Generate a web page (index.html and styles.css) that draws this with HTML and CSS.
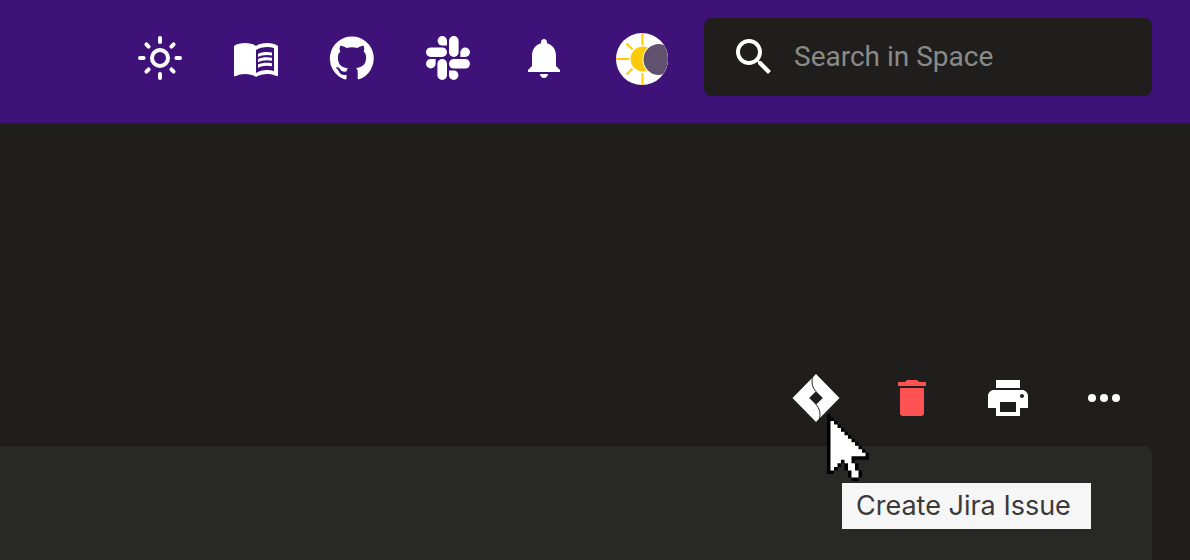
FILE: index.html
```html
<!DOCTYPE html>
<html lang="en">
<head>
<meta charset="utf-8">
<meta name="viewport" content="width=device-width, initial-scale=1">
<title>Space</title>
<link rel="stylesheet" href="styles.css">
</head>
<body>
<header class="topbar">
  <nav class="topbar-nav" aria-label="Main">
    <button class="icon-button" type="button" aria-label="Toggle theme">
      <svg class="icon" viewBox="0 0 24 24"><g fill="none" stroke="currentColor" stroke-width="2" stroke-linecap="round"><circle cx="12" cy="12" r="4"/><path d="M12 2v2M12 20v2M2 12h1.8M20.2 12H22M5.2 5.2l1.1 1.1M17.7 17.7l1.1 1.1M5.2 18.8l1.1-1.1M17.7 6.3l1.1-1.1"/></g></svg>
    </button>
    <a class="icon-button" href="#docs" aria-label="Documentation">
      <svg class="icon" viewBox="0 0 24 24"><path d="M21 5c-1.11-.35-2.33-.5-3.5-.5-1.95 0-4.05.4-5.5 1.5-1.45-1.1-3.55-1.5-5.5-1.5S2.45 4.9 1 6v14.65c0 .25.25.5.5.5.1 0 .15-.05.25-.05C3.1 20.45 5.05 20 6.5 20c1.95 0 4.05.4 5.5 1.5 1.35-.85 3.8-1.5 5.5-1.5 1.65 0 3.35.3 4.75 1.05.1.05.15.05.25.05.25 0 .5-.25.5-.5V6c-.6-.45-1.25-.75-2-1zm0 13.500c-1.100-.35-2.300-.5-3.500-.5-1.700 0-4.150.65-5.500 1.500V8c1.350-.85 3.800-1.500 5.500-1.500 1.200 0 2.400.15 3.500.5v11.500z"/><path d="M17.500 10.500c.88 0 1.730.09 2.500.26V9.240c-.79-.15-1.640-.24-2.500-.24-1.700 0-3.240.29-4.500.83v1.660c1.130-.64 2.700-.99 4.500-.99zM13 12.490v1.660c1.130-.64 2.700-.99 4.500-.99.88 0 1.730.09 2.500.26V11.900c-.79-.15-1.640-.24-2.500-.24-1.700 0-3.240.3-4.500.83zM17.500 14.330c-1.700 0-3.240.29-4.500.83v1.660c1.130-.64 2.700-.99 4.500-.99.88 0 1.730.09 2.500.26v-1.520c-.79-.16-1.640-.24-2.500-.24z"/></svg>
    </a>
    <a class="icon-button" href="#github" aria-label="GitHub">
      <svg class="icon" viewBox="0 0 24 24"><path d="M12 1.270a11 11 0 00-3.480 21.460c.55.09.73-.28.73-.55v-1.840c-3.030.64-3.670-1.460-3.670-1.460-.55-1.290-1.280-1.650-1.280-1.650-.92-.65.1-.65.1-.65 1.100 0 1.730 1.100 1.730 1.100.92 1.650 2.570 1.200 3.210.92a2 2 0 01.64-1.470c-2.470-.27-5.040-1.190-5.040-5.500 0-1.100.46-2.100 1.200-2.840a3.760 3.760 0 010-2.930s.91-.28 3.110 1.100c1.800-.49 3.700-.49 5.500 0 2.100-1.380 3.020-1.100 3.020-1.100a3.760 3.760 0 01.1 2.830c.83.74 1.200 1.740 1.200 2.940 0 4.210-2.570 5.130-5.040 5.400.45.37.82.92.82 2.020v3.030c0 .27.1.64.73.55A11 11 0 0012 1.270"/></svg>
    </a>
    <a class="icon-button" href="#slack" aria-label="Slack">
      <svg class="icon" viewBox="0 0 24 24"><defs><g id="slack-arm"><rect x="12.500" y="1" width="4.800" height="10.500" rx="2.400"/><path d="M11.500 5.800V3.400A2.350 2.400 0 1 0 9.150 5.800z"/></g></defs><use href="#slack-arm"/><use href="#slack-arm" transform="rotate(90 12 12)"/><use href="#slack-arm" transform="rotate(180 12 12)"/><use href="#slack-arm" transform="rotate(270 12 12)"/></svg>
    </a>
    <button class="icon-button" type="button" aria-label="Notifications">
      <svg class="icon" viewBox="0 0 24 24"><path d="M12 22c1.100 0 2-.9 2-2h-4c0 1.100.89 2 2 2zm6-6v-5c0-3.070-1.640-5.640-4.500-6.320V4c0-.83-.67-1.500-1.500-1.500s-1.500.67-1.500 1.500v.68C7.630 5.360 6 7.920 6 11v5l-2 2v1h16v-1l-2-2z"/></svg>
    </button>
    <button class="icon-button" type="button" aria-label="Account">
      <svg class="avatar" viewBox="0 -2 52 54"><defs><clipPath id="avatar-clip"><circle cx="26" cy="26" r="26"/></clipPath></defs><g clip-path="url(#avatar-clip)"><path fill="#fff" d="M0 0h52v52H0z"/><path stroke="#fecb0a" stroke-width="2" d="M26.500 0v12M26.500 40v12M0 26h13M10.500 10.500l6 6M10.500 41.500l6-6"/><circle cx="27" cy="26" r="12.500" fill="#fecb0a"/><circle cx="43" cy="26.500" r="16.500" fill="#fff"/><circle cx="43" cy="26.500" r="15.500" fill="#60516f"/></g></svg>
    </button>
  </nav>
  <form class="search" role="search">
    <svg class="icon" viewBox="0 0 24 24" aria-hidden="true"><path d="M15.500 14h-.79l-.28-.27C15.410 12.590 16 11.110 16 9.500 16 5.910 13.090 3 9.500 3S3 5.910 3 9.500 5.910 16 9.500 16c1.610 0 3.090-.59 4.230-1.570l.27.28v.79l5 4.990L20.490 19l-4.990-5zm-6 0C7.010 14 5 11.990 5 9.500S7.010 5 9.500 5 14 7.010 14 9.500 11.990 14 9.500 14z"/></svg>
    <input class="search-input" type="search" placeholder="Search in Space" aria-label="Search in Space">
  </form>
</header>
<main class="page">
  <div class="toolbar" role="toolbar" aria-label="Page actions">
    <div class="action">
      <button class="icon-button" type="button" aria-label="Create Jira Issue" aria-describedby="jira-tip">
        <svg class="icon" viewBox="0 0 24 24"><path fill-rule="evenodd" d="M12 0l11.750 12L12 24 .25 12zM12 8.600L8.600 12l3.400 3.400 3.400-3.400z"/><path fill="none" stroke="#1f1e1c" stroke-width=".5" d="M10.400 1.200C9.600 4 10 6.600 12 8.700M12 15.300c2 2.100 2.400 4.700 1.600 7.500"/></svg>
      </button>
      <svg class="pointer" viewBox="0 0 12 19" preserveAspectRatio="none" aria-hidden="true"><path fill="#000" d="M0 0h1v1h1v1h1v1h1v1h1v1h1v1h1v1h1v1h1v1h1v1h1v1h1v2H8v1h1v2h1v2H9v1H7v-1H6v-2H5v-2H4v1H3v1H2v1H0z"/><path fill="#fff" d="M1 2h1v1h1v1h1v1h1v1h1v1h1v1h1v1h1v1h1v1h1v1H7v2h1v2h1v2H7v-2H6v-2H5v-1H4v1H3v1H2v1H1z"/></svg>
      <span class="tooltip" role="tooltip" id="jira-tip">Create Jira Issue</span>
    </div>
    <button class="icon-button danger" type="button" aria-label="Delete">
      <svg class="icon" viewBox="0 0 24 24"><path d="M6 7h12v12.500q0 1.500-1.500 1.500h-9Q6 21 6 19.500zM5 4h3.500q.5-1 1.500-1h4q1 0 1.500 1H19v2H5z"/></svg>
    </button>
    <button class="icon-button" type="button" aria-label="Print">
      <svg class="icon" viewBox="0 0 24 24"><path d="M19 8H5c-1.660 0-3 1.340-3 3v6h4v4h12v-4h4v-6c0-1.660-1.340-3-3-3zm-3 11H8v-5h8v5zm3-7c-.55 0-1-.45-1-1s.45-1 1-1 1 .45 1 1-.45 1-1 1zm-1-9H6v4h12V3z"/></svg>
    </button>
    <button class="icon-button" type="button" aria-label="More actions">
      <svg class="icon" viewBox="0 0 24 24"><circle cx="6" cy="12" r="2"/><circle cx="12" cy="12" r="2"/><circle cx="18" cy="12" r="2"/></svg>
    </button>
  </div>
  <section class="panel" aria-label="Content"></section>
</main>
</body>
</html>
```
FILE: styles.css
```css
* {
  box-sizing: border-box;
}

body {
  margin: 0;
  min-height: 100vh;
  display: flex;
  flex-direction: column;
  background: #1f1e1c;
  color: #fff;
  font-family: Roboto, "Liberation Sans", sans-serif;
}

.topbar {
  display: flex;
  justify-content: flex-end;
  gap: 36px;
  padding: 18px 38px 26px;
  background: #3f1279;
  border-bottom: 2px solid #371065;
}

.topbar-nav {
  display: flex;
  align-items: center;
  gap: 48px;
  padding-top: 2px;
}

.icon-button {
  display: flex;
  padding: 0;
  border: 0;
  background: none;
  color: inherit;
  cursor: pointer;
}

.icon {
  display: block;
  flex: none;
  width: 48px;
  height: 48px;
  fill: currentColor;
}

.avatar {
  display: block;
  width: 52px;
  height: 54px;
}

.search {
  display: flex;
  align-items: center;
  gap: 16px;
  flex: 0 1 448px;
  min-width: 0;
  height: 78px;
  padding: 0 26px;
  border-radius: 8px;
  background: #1f1e1c;
}

.search-input {
  flex: 1;
  width: 100%;
  min-width: 0;
  padding: 0;
  border: 0;
  outline: 0;
  background: none;
  color: #fff;
  font: 28px/32px Roboto, "Liberation Sans", sans-serif;
}

.search-input::placeholder {
  color: #8a8a89;
  opacity: 1;
}

.page {
  flex: 1;
  display: flex;
  flex-direction: column;
  gap: 24px;
  padding-top: 250px;
}

.toolbar {
  display: flex;
  justify-content: flex-end;
  gap: 48px;
  padding-right: 62px;
}

.action {
  position: relative;
}

.danger {
  color: #ff5252;
}

.pointer {
  position: absolute;
  z-index: 2;
  top: 40px;
  left: 35px;
  width: 42px;
  height: 67px;
}

.tooltip {
  position: absolute;
  z-index: 1;
  top: 109px;
  left: 50px;
  padding: 7px 20px 7px 14px;
  background: #f6f6f6;
  color: #3a3a3a;
  font: 27px/32px Inter, "Liberation Sans", sans-serif;
  white-space: nowrap;
}

.panel {
  flex: 1;
  margin-right: 38px;
  border-top-right-radius: 8px;
  background: #282827;
}
```
